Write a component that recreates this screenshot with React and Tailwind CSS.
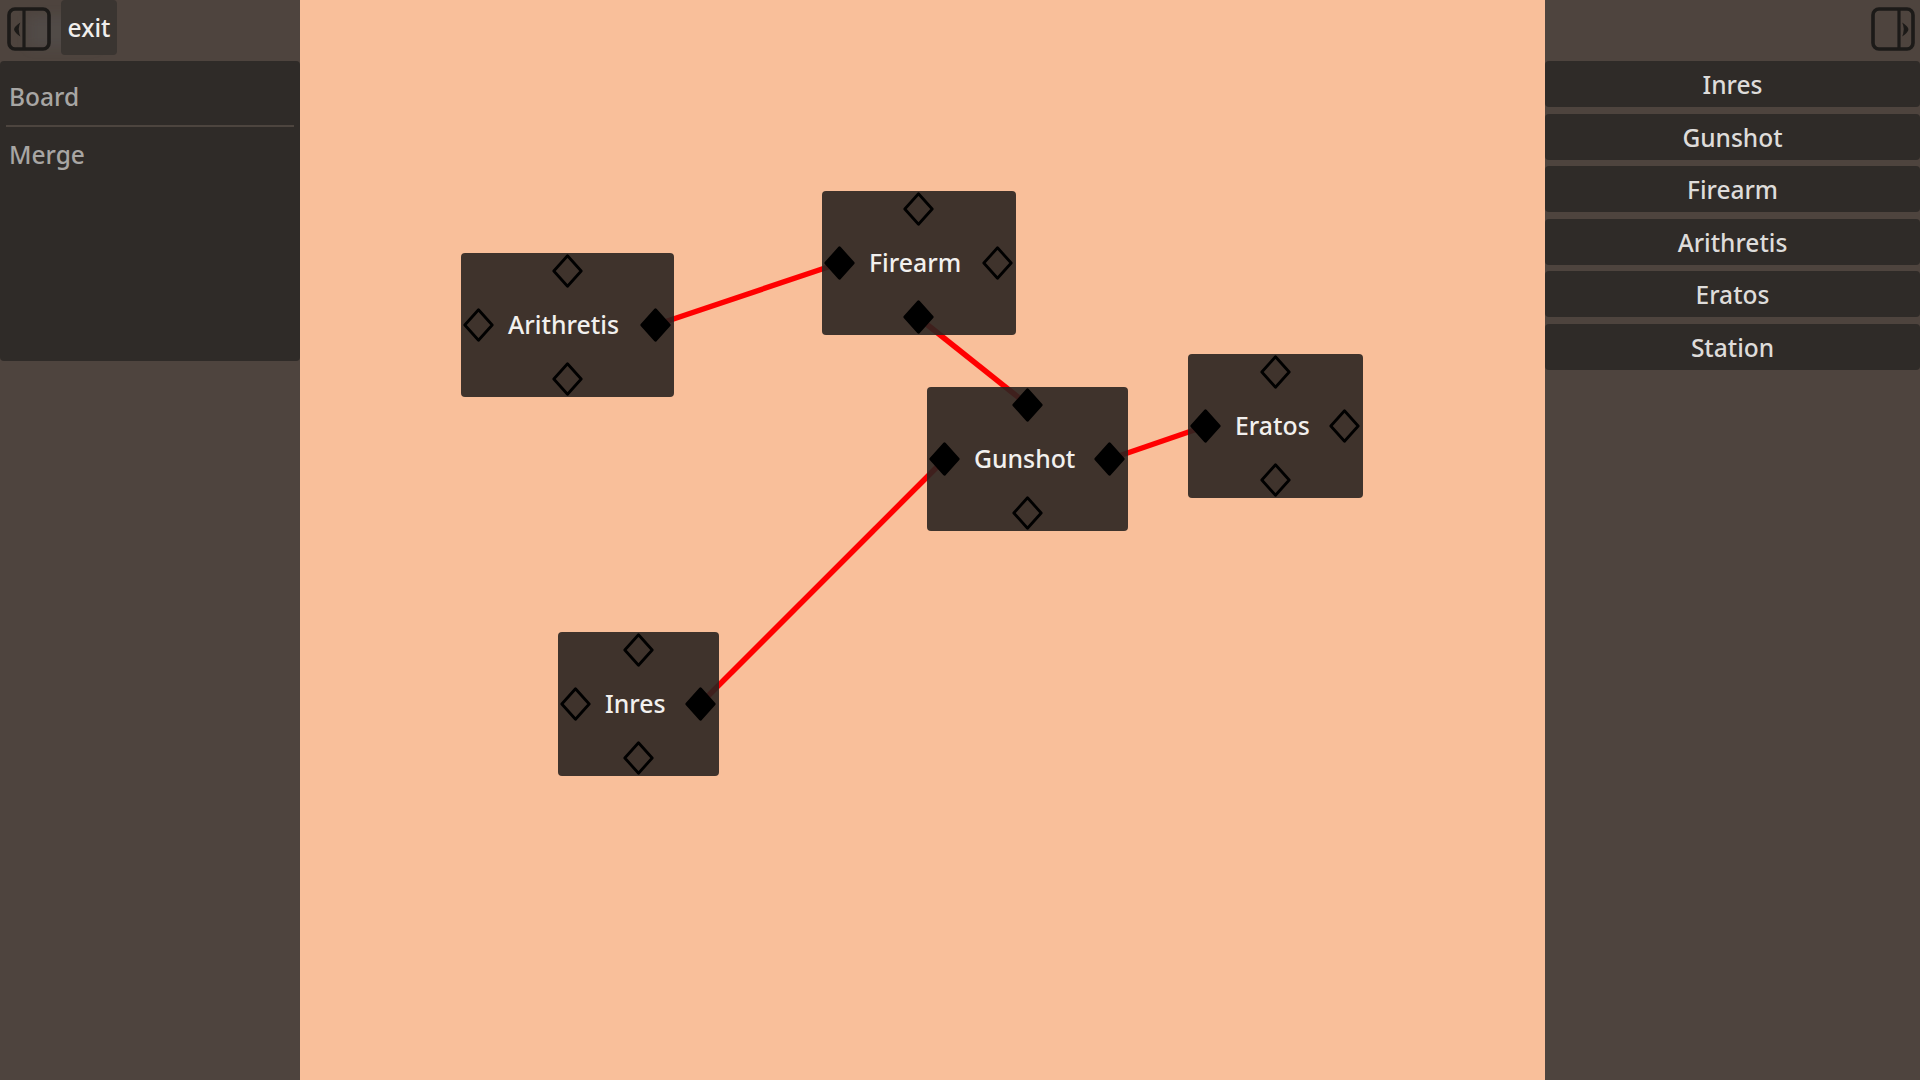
const font = { fontFamily: '"Noto Sans", sans-serif' };

const nodes = [
  { name: "Arithretis", x: 461, y: 253, w: 213, filled: ["right"] },
  { name: "Firearm", x: 822, y: 191, w: 194, filled: ["left", "bottom"] },
  { name: "Gunshot", x: 927, y: 387, w: 201, filled: ["top", "left", "right"] },
  { name: "Eratos", x: 1188, y: 354, w: 175, filled: ["left"] },
  { name: "Inres", x: 558, y: 632, w: 161, filled: ["right"] },
];

const lines = [
  [355.5, 325, 540, 263],
  [617.6, 317, 728, 405],
  [810, 459, 906, 426],
  [401, 703, 645, 459],
];

function Diamond({ filled, className }) {
  return (
    <svg width="31" height="34" viewBox="0 0 31 34" className={className}>
      <polygon
        points="15.5,1.8 29.2,17 15.5,32.2 1.8,17"
        fill={filled ? "#000" : "none"}
        stroke="#000"
        strokeWidth="2.8"
        strokeLinejoin="round"
      />
    </svg>
  );
}

function Node({ node }) {
  const f = (s) => node.filled.includes(s);
  return (
    <div
      className="absolute h-[144px] rounded-[4px] bg-[#2a2420]/90 flex items-center pl-[47px] pb-[1px] text-[24.8px] font-medium text-[#f2f0ee]"
      style={{ left: node.x, top: node.y, width: node.w }}
    >
      <span className="leading-none">{node.name}</span>
      <Diamond filled={f("top")} className="absolute left-1/2 top-[1px] -ml-[16px]" />
      <Diamond filled={f("bottom")} className="absolute left-1/2 bottom-[1px] -ml-[16px]" />
      <Diamond filled={f("left")} className="absolute left-[2px] top-1/2 -translate-y-1/2" />
      <Diamond filled={f("right")} className="absolute right-[3px] top-1/2 -translate-y-1/2" />
    </div>
  );
}

function PanelIcon({ side }) {
  const left = side === "left";
  return (
    <svg width="44" height="44" viewBox="0 0 44 44" fill="none">
      <rect x="2" y="2" width="40" height="40" rx="6" stroke="#1c1a18" strokeWidth="3.6" />
      <path d={left ? "M17 2V42" : "M28 2V42"} stroke="#1c1a18" strokeWidth="3.2" />
      <path
        d={left ? "M11.5 18C9 20 8 21 8 22.5C8 24 9 25 11.5 27C10.5 24 10.5 21 11.5 18Z" : "M33 18C35.5 20 36.5 21 36.5 22.5C36.5 24 35.5 25 33 27C34 24 34 21 33 18Z"}
        fill="#1c1a18"
        stroke="#1c1a18"
        strokeWidth="1.8"
      />
    </svg>
  );
}

export default function App() {
  const items = ["Inres", "Gunshot", "Firearm", "Arithretis", "Eratos", "Station"];
  return (
    <div className="flex h-[1080px] w-[1920px] overflow-hidden bg-[#4e443e] text-[24.5px] font-medium" style={font}>
      <aside className="relative flex w-[300px] shrink-0 flex-col">
        <div className="absolute left-[28px] top-[16px] h-[32px] w-[70px] bg-[#6f8a9c]/10 blur-[6px]" />
        <div className="relative flex h-[61px] items-start gap-[10px] pl-[7px]">
          <div className="pt-[7px]"><PanelIcon side="left" /></div>
          <button className="flex h-[55px] w-[56px] items-center justify-center rounded-[4px] bg-[#3a3531] pt-[2px] font-medium text-[#f0eeec]">exit</button>
        </div>
        <div className="relative h-[300px] rounded-[4px] bg-[#2f2b28] px-[6px] text-[#a8a6a4]">
          <div className="flex h-[64px] items-end pb-[16px] pl-[3px] leading-none">Board</div>
          <div className="h-[2px] bg-[#4d453f]" />
          <div className="flex h-[50px] items-center pl-[3px] pt-[6px] leading-none">Merge</div>
        </div>
      </aside>

      <main className="relative w-[1245px] shrink-0 bg-[#f9bf9a]">
        <svg width="1245" height="1080" className="absolute inset-0">
          {lines.map(([x1, y1, x2, y2], i) => (
            <line key={i} x1={x1} y1={y1} x2={x2} y2={y2} stroke="#ff0000" strokeWidth="5.5" />
          ))}
        </svg>
        {nodes.map((n) => (
          <Node key={n.name} node={{ ...n, x: n.x - 300 }} />
        ))}
      </main>

      <aside className="flex min-w-0 flex-1 flex-col">
        <div className="flex h-[61px] items-start justify-end pr-[5px] pt-[7px]"><PanelIcon side="right" /></div>
        <div className="flex flex-col gap-[6.5px] text-[#dedcda]">
          {items.map((t) => (
            <div key={t} className="flex h-[46px] items-center justify-center rounded-[4px] bg-[#2f2b28] pt-[3px]">{t}</div>
          ))}
        </div>
      </aside>
    </div>
  );
}
